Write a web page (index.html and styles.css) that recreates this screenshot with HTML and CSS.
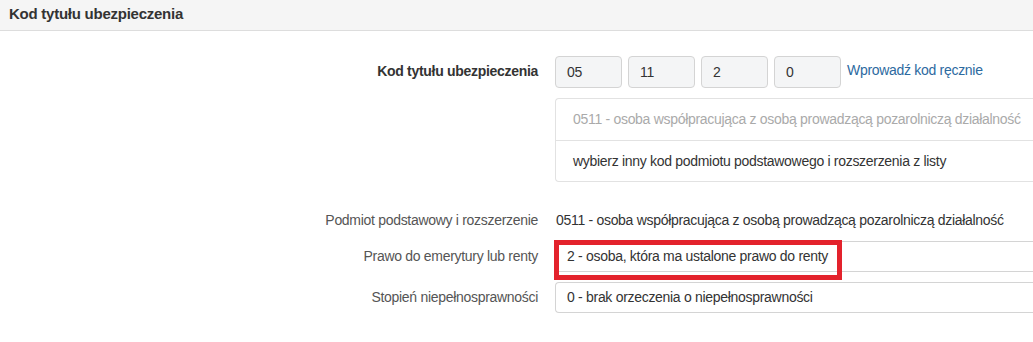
FILE: index.html
```html
<!DOCTYPE html>
<html lang="pl">
<head>
<meta charset="utf-8">
<title>Kod tytułu ubezpieczenia</title>
<link rel="stylesheet" href="styles.css">
</head>
<body>
<div class="panel">
  <div class="panel-heading">Kod tytułu ubezpieczenia</div>
  <div class="panel-body">
    <div class="row row-code">
      <div class="label bold">Kod tytułu ubezpieczenia</div>
      <div class="control">
        <div class="code-inputs">
          <div class="code-box">05</div>
          <div class="code-box">11</div>
          <div class="code-box">2</div>
          <div class="code-box">0</div>
          <a class="manual-link" href="#">Wprowadź kod ręcznie</a>
        </div>
        <div class="list-group">
          <div class="list-item disabled">0511 - osoba współpracująca z osobą prowadzącą pozarolniczą działalność</div>
          <div class="list-item">wybierz inny kod podmiotu podstawowego i rozszerzenia z listy</div>
        </div>
      </div>
    </div>
    <div class="row row-static">
      <div class="label">Podmiot podstawowy i rozszerzenie</div>
      <div class="control static">0511 - osoba współpracująca z osobą prowadzącą pozarolniczą działalność</div>
    </div>
    <div class="row row-select">
      <div class="label">Prawo do emerytury lub renty</div>
      <div class="control">
        <div class="select highlighted">2 - osoba, która ma ustalone prawo do renty<span class="annotation"></span></div>
      </div>
    </div>
    <div class="row row-select">
      <div class="label">Stopień niepełnosprawności</div>
      <div class="control">
        <div class="select">0 - brak orzeczenia o niepełnosprawności</div>
      </div>
    </div>
  </div>
</div>
</body>
</html>
```
FILE: styles.css
```css
html, body {
  margin: 0;
  padding: 0;
  background: #fff;
  overflow: hidden;
}
body {
  font-family: "Liberation Sans", Arial, sans-serif;
  font-size: 14px;
  letter-spacing: -0.3px;
  color: #333;
  width: 1033px;
  height: 342px;
}
.panel {
  overflow: hidden;
}
.panel-heading {
  height: 31px;
  box-sizing: border-box;
  padding: 6px 9px 0;
  background: #f5f5f5;
  border-bottom: 1px solid #ddd;
  font-weight: bold;
  font-size: 15px;
  letter-spacing: -0.25px;
  line-height: 16px;
  color: #333;
}
.panel-body {
  padding-top: 25px;
}
.row {
  display: grid;
  grid-template-columns: 538px 600px;
  column-gap: 17px;
}
.label {
  text-align: right;
  color: #555;
  line-height: 20px;
}
.label.bold {
  font-weight: bold;
  color: #333;
  padding-top: 5px;
}
.code-inputs {
  display: flex;
  align-items: center;
  gap: 6px;
  height: 32px;
}
.code-box {
  width: 67px;
  height: 32px;
  box-sizing: border-box;
  border: 1px solid #d4d4d4;
  border-radius: 4px;
  background: #f4f5f6;
  padding: 0 11px;
  line-height: 30px;
  color: #333;
}
.manual-link {
  color: #2d6a9f;
  text-decoration: none;
  padding-bottom: 4px;
}
.list-group {
  margin-top: 10px;
  border: 1px solid #e2e2e2;
  border-right: none;
  border-radius: 4px 0 0 4px;
}
.list-item {
  height: 41px;
  box-sizing: border-box;
  padding: 0 17px;
  line-height: 40px;
  white-space: nowrap;
  color: #333;
}
.list-item + .list-item {
  border-top: 1px solid #e2e2e2;
}
.list-item.disabled {
  color: #aaa;
}
.row-static {
  margin-top: 28px;
}
.static {
  padding-left: 1px;
  line-height: 20px;
  white-space: nowrap;
}
.row-select {
  margin-top: 11px;
}
.row-select + .row-select {
  margin-top: 10px;
}
.row-select .label {
  line-height: 31px;
}
.select {
  position: relative;
  height: 31px;
  box-sizing: border-box;
  border: 1px solid #d4d4d4;
  border-right: none;
  border-radius: 4px 0 0 4px;
  padding: 0 11px;
  line-height: 29px;
  white-space: nowrap;
  color: #333;
}
.annotation {
  position: absolute;
  left: -2px;
  top: -2px;
  width: 288px;
  height: 40px;
  box-sizing: border-box;
  border: 5px solid #e3222c;
}
```
